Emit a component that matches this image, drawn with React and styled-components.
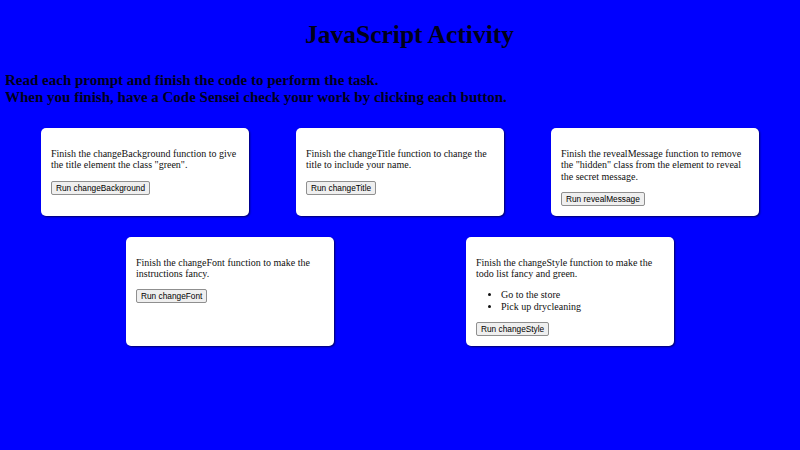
import React from 'react';
import styled, { createGlobalStyle } from 'styled-components';

const GlobalStyle = createGlobalStyle`
  body {
    margin: 5px;
    background-color: #0000ff;
    font-family: "Liberation Serif", "Times New Roman", serif;
    color: #000;
  }
`;

const Title = styled.h1`
  font-size: 25.5px;
  text-align: center;
  margin: 15px 0 22px;
  padding-left: 19px;
  color: #00001a;
`;

const Instructions = styled.h3`
  font-size: 15px;
  margin: 0 0 11px;
  color: #00001a;
`;

const CardGrid = styled.div`
  display: flex;
  flex-wrap: wrap;
  justify-content: space-evenly;
  margin: 0 -5px;
`;

const Card = styled.div`
  width: 188px;
  margin: 11px 6px 10px;
  padding: 10px;
  background-color: #fff;
  border-radius: 5px;
  box-shadow: 1px 1px 2px rgba(0, 0, 0, 0.6);
  color: #111;
  font-size: 10px;
  line-height: 11.3px;
`;

const Prompt = styled.p`
  margin: 10px 0;
`;

const TodoList = styled.ul`
  margin: 10px 0;
  padding-left: 25px;
`;

const RunButton = styled.button`
  font-family: "Liberation Sans", Arial, sans-serif;
  font-size: 8.3px;
  line-height: 10px;
  padding: 1px 4px;
  color: #000;
  background-color: #efefef;
  border: 1px solid #8f8f8f;
  border-radius: 2px;
`;

const activities = [
  {
    prompt: 'Finish the changeBackground function to give the title element the class "green".',
    fn: 'changeBackground',
  },
  {
    prompt: 'Finish the changeTitle function to change the title to include your name.',
    fn: 'changeTitle',
  },
  {
    prompt: 'Finish the revealMessage function to remove the "hidden" class from the element to reveal the secret message.',
    fn: 'revealMessage',
  },
  {
    prompt: 'Finish the changeFont function to make the instructions fancy.',
    fn: 'changeFont',
  },
  {
    prompt: 'Finish the changeStyle function to make the todo list fancy and green.',
    fn: 'changeStyle',
    todos: ['Go to the store', 'Pick up drycleaning'],
  },
];

function App() {
  return (
    <>
      <GlobalStyle />
      <Title>JavaScript Activity</Title>
      <Instructions>
        Read each prompt and finish the code to perform the task.
        <br />
        When you finish, have a Code Sensei check your work by clicking each button.
      </Instructions>
      <CardGrid>
        {activities.map((activity) => (
          <Card key={activity.fn}>
            <Prompt>{activity.prompt}</Prompt>
            {activity.todos && (
              <TodoList>
                {activity.todos.map((todo) => (
                  <li key={todo}>{todo}</li>
                ))}
              </TodoList>
            )}
            <RunButton>Run {activity.fn}</RunButton>
          </Card>
        ))}
      </CardGrid>
    </>
  );
}

export default App;
